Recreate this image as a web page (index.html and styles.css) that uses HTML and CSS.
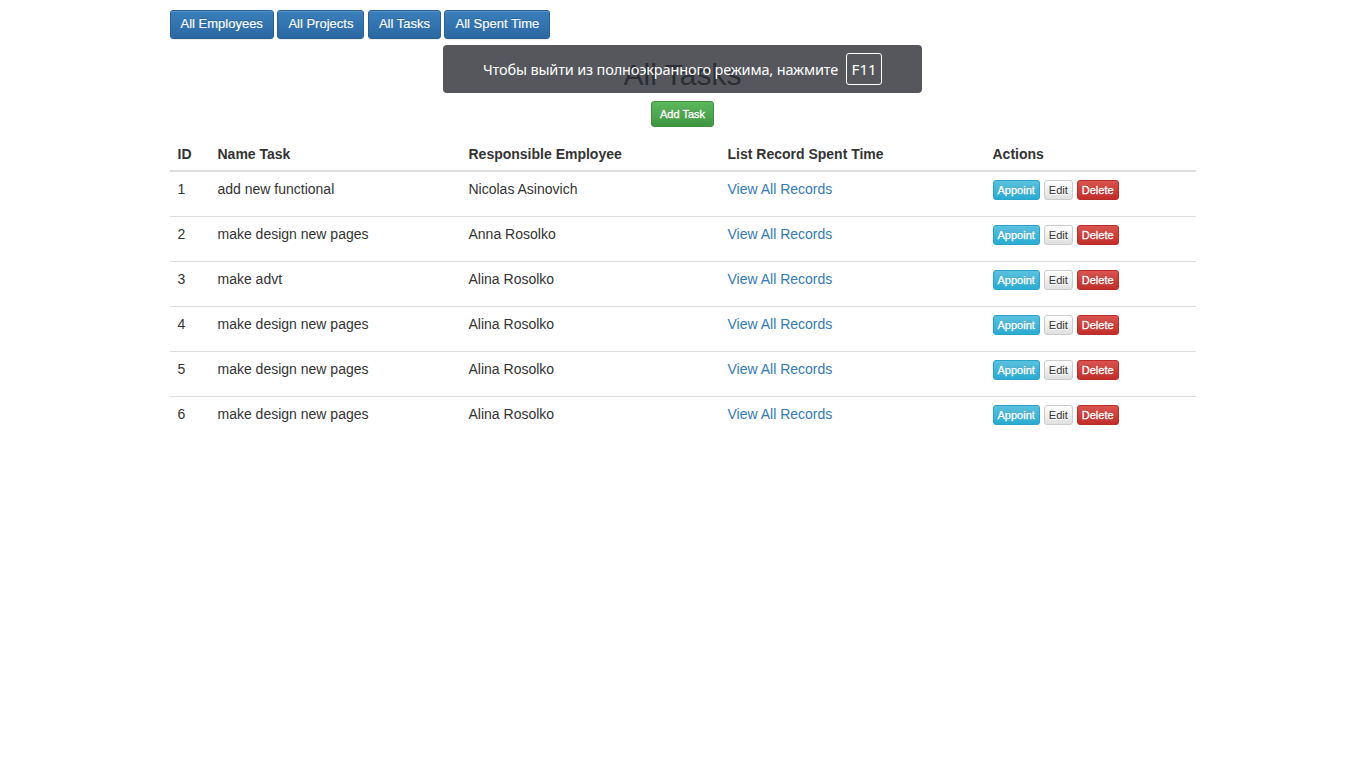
FILE: index.html
```html
<!DOCTYPE html>
<html lang="en">
<head>
<meta charset="utf-8">
<title>All Tasks</title>
<link rel="stylesheet" href="styles.css">
</head>
<body>
<div class="container">
  <nav class="nav">
    <a class="btn btn-primary" href="#">All Employees</a>
    <a class="btn btn-primary" href="#">All Projects</a>
    <a class="btn btn-primary" href="#">All Tasks</a>
    <a class="btn btn-primary" href="#">All Spent Time</a>
  </nav>
  <h2 class="title">All Tasks</h2>
  <div class="add-row">
    <a class="btn btn-small btn-success" href="#">Add Task</a>
  </div>
  <table class="table">
    <thead>
      <tr>
        <th class="c-id">ID</th>
        <th class="c-name">Name Task</th>
        <th class="c-emp">Responsible Employee</th>
        <th class="c-rec">List Record Spent Time</th>
        <th class="c-act">Actions</th>
      </tr>
    </thead>
    <tbody>
      <tr>
        <td>1</td><td>add new functional</td><td>Nicolas Asinovich</td>
        <td><a class="link" href="#">View All Records</a></td>
        <td><div class="actions"><a class="btn btn-xs btn-info" href="#">Appoint</a><a class="btn btn-xs btn-default" href="#">Edit</a><a class="btn btn-xs btn-danger" href="#">Delete</a></div></td>
      </tr>
      <tr>
        <td>2</td><td>make design new pages</td><td>Anna Rosolko</td>
        <td><a class="link" href="#">View All Records</a></td>
        <td><div class="actions"><a class="btn btn-xs btn-info" href="#">Appoint</a><a class="btn btn-xs btn-default" href="#">Edit</a><a class="btn btn-xs btn-danger" href="#">Delete</a></div></td>
      </tr>
      <tr>
        <td>3</td><td>make advt</td><td>Alina Rosolko</td>
        <td><a class="link" href="#">View All Records</a></td>
        <td><div class="actions"><a class="btn btn-xs btn-info" href="#">Appoint</a><a class="btn btn-xs btn-default" href="#">Edit</a><a class="btn btn-xs btn-danger" href="#">Delete</a></div></td>
      </tr>
      <tr>
        <td>4</td><td>make design new pages</td><td>Alina Rosolko</td>
        <td><a class="link" href="#">View All Records</a></td>
        <td><div class="actions"><a class="btn btn-xs btn-info" href="#">Appoint</a><a class="btn btn-xs btn-default" href="#">Edit</a><a class="btn btn-xs btn-danger" href="#">Delete</a></div></td>
      </tr>
      <tr>
        <td>5</td><td>make design new pages</td><td>Alina Rosolko</td>
        <td><a class="link" href="#">View All Records</a></td>
        <td><div class="actions"><a class="btn btn-xs btn-info" href="#">Appoint</a><a class="btn btn-xs btn-default" href="#">Edit</a><a class="btn btn-xs btn-danger" href="#">Delete</a></div></td>
      </tr>
      <tr>
        <td>6</td><td>make design new pages</td><td>Alina Rosolko</td>
        <td><a class="link" href="#">View All Records</a></td>
        <td><div class="actions"><a class="btn btn-xs btn-info" href="#">Appoint</a><a class="btn btn-xs btn-default" href="#">Edit</a><a class="btn btn-xs btn-danger" href="#">Delete</a></div></td>
      </tr>
    </tbody>
  </table>
</div>
<div class="fs-toast">
  <span class="fs-text">Чтобы выйти из полноэкранного режима, нажмите</span>
  <span class="fs-key">F11</span>
</div>
</body>
</html>
```

FILE: styles.css
```css
* { box-sizing: border-box; }

body {
  margin: 0;
  background: #fff;
  color: #333;
  font-family: "Liberation Sans", Arial, sans-serif;
  font-size: 14px;
  line-height: 20px;
}

.container {
  width: 1026px;
  margin: 0 auto;
  padding-top: 10px;
}

.nav {
  display: flex;
  gap: 3.5px;
}

.btn {
  display: inline-block;
  text-decoration: none;
  border: 1px solid transparent;
  border-radius: 3px;
  text-align: center;
  white-space: nowrap;
}

.btn-primary {
  font-size: 13px;
  line-height: 17px;
  padding: 4px 10px 6px;
  color: #fff;
  background-image: linear-gradient(to bottom, #3a7fbc 0, #2b68a3 100%);
  border-color: #2a5f93;
  text-shadow: 0 -1px 0 rgba(0, 0, 0, 0.2);
  box-shadow: inset 0 1px 0 rgba(255, 255, 255, 0.15), 0 1px 1px rgba(0, 0, 0, 0.075);
  -webkit-text-stroke: 0.15px #fff;
}

.title {
  margin: 19px 0 10px;
  text-align: center;
  font-size: 30px;
  line-height: 33px;
  font-weight: normal;
  color: #333;
}

.add-row {
  display: flex;
  justify-content: center;
  margin-bottom: 9px;
}

.btn-small {
  font-size: 11px;
  line-height: 14px;
  padding: 5px 8px;
}

.btn-success {
  color: #fff;
  background-image: linear-gradient(to bottom, #5cb85c 0, #419641 100%);
  border-color: #3e8f3e;
  text-shadow: 0 -1px 0 rgba(0, 0, 0, 0.2);
  -webkit-text-stroke: 0.3px #fff;
}

.btn-xs {
  font-size: 11px;
  line-height: 16px;
  padding: 1px 4px;
}

.btn-info {
  color: #fff;
  background-image: linear-gradient(to bottom, #5bc0de 0, #2aabd2 100%);
  border-color: #28a4c9;
  text-shadow: 0 -1px 0 rgba(0, 0, 0, 0.2);
  -webkit-text-stroke: 0.3px #fff;
}

.btn-default {
  color: #333;
  background-image: linear-gradient(to bottom, #fff 0, #e0e0e0 100%);
  border-color: #ccc;
  text-shadow: 0 1px 0 #fff;
}

.btn-danger {
  color: #fff;
  background-image: linear-gradient(to bottom, #d9534f 0, #c12e2a 100%);
  border-color: #b92c28;
  text-shadow: 0 -1px 0 rgba(0, 0, 0, 0.2);
  -webkit-text-stroke: 0.3px #fff;
}

.table {
  width: 100%;
  border-collapse: collapse;
  border-spacing: 0;
}

.table th {
  text-align: left;
  font-weight: bold;
  padding: 8px 8px 6px;
  border-bottom: 2px solid #ddd;
  vertical-align: bottom;
}

.table td {
  padding: 7px 8px 8px;
  height: 45px;
  border-top: 1px solid #ddd;
  vertical-align: top;
}

.table tbody tr:first-child td {
  border-top: 0;
  height: 45px;
  padding-top: 7px;
}

.c-id { width: 40px; }
.c-name { width: 251px; }
.c-emp { width: 259px; }
.c-rec { width: 265px; }

.link {
  color: #337ab7;
  text-decoration: none;
}

.actions {
  display: flex;
  gap: 4px;
  padding-top: 1px;
}

.fs-toast {
  position: absolute;
  top: 45px;
  left: 443px;
  width: 479px;
  height: 48px;
  display: flex;
  align-items: center;
  justify-content: center;
  gap: 8px;
  background: rgba(43, 45, 51, 0.8);
  border-radius: 4px;
  color: #fff;
  font-family: "Noto Sans", "Open Sans", sans-serif;
  font-size: 14.5px;
  letter-spacing: -0.15px;
}

.fs-key {
  display: flex;
  align-items: center;
  justify-content: center;
  width: 36px;
  height: 32px;
  border: 1px solid #fff;
  border-radius: 3px;
  font-size: 15px;
  letter-spacing: 0;
}
```
